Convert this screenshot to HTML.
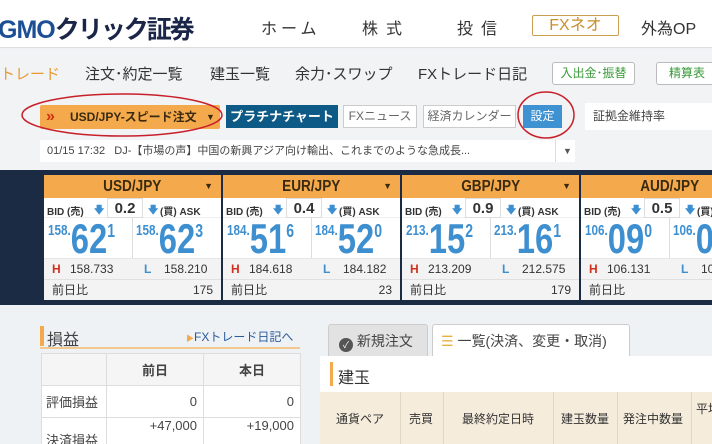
<!DOCTYPE html><html><head><meta charset="utf-8"><style>
*{margin:0;padding:0;box-sizing:border-box}
html,body{width:712px;height:444px;overflow:hidden}
body{background:#eef2f5;font-family:"Liberation Sans","Noto Sans CJK JP",sans-serif;position:relative;color:#333}
.a{position:absolute;white-space:nowrap}
.card{position:absolute;top:175px;width:177px;height:125px;background:#fff;overflow:hidden}
.card .h{height:23px;background:#f4aa4c;font:bold 16px "Liberation Sans",sans-serif;color:#3a2a10;text-align:center;line-height:23px;position:relative}
.card .h s{text-decoration:none;display:inline-block;transform:scaleX(.85)}
.card .h i{position:absolute;right:8px;top:0;font-style:normal;font-size:9px}
.bid{height:20px;font:bold 10px "Liberation Sans","Noto Sans CJK JP",sans-serif;color:#333;position:relative;border-bottom:1px solid #eee}
.bid span{position:absolute;top:5px}
.sp{position:absolute;left:63px;top:0;width:36px;height:20px;border:1px solid #ddd;text-align:center;font-size:15px;line-height:19px}
.pr{height:40px;position:relative;color:#3d8fd0;font-weight:bold}
.pr .d{position:absolute;left:88px;top:0;height:40px;border-left:1px solid #ddd}
.pr .p{position:absolute;top:0;transform:scaleX(.78);transform-origin:left top}
.pr b{font-size:15px;vertical-align:top;position:relative;top:4px}
.pr em{font-style:normal;font-size:42px;line-height:42px}
.pr sup{font-size:18px;vertical-align:top;position:relative;top:3px}
.hl{height:21px;background:#f3f3f3;font:12px "Liberation Sans",sans-serif;position:relative;line-height:21px;border-top:1px solid #e5e5e5}
.zr{height:21px;background:#f3f3f3;border-top:1px solid #e0e0e0;font:12px "Liberation Sans","Noto Sans CJK JP",sans-serif;line-height:20px;padding:0 8px;display:flex;justify-content:space-between}
td,th{border:1px solid #ddd}
</style></head><body>
<div class="a" style="left:0;top:0;width:712px;height:48px;background:#fff;border-bottom:1px solid #ddd"></div>
<div class="a" style="left:-2px;top:10px;font:bold 25px 'Liberation Sans','Noto Sans CJK JP',sans-serif;color:#1d4f95;letter-spacing:-1px">GMO<span style="color:#1a2548;letter-spacing:-2px">クリック証券</span></div>
<div class="a" style="left:261px;top:15px;font-size:16px;letter-spacing:4px;color:#333">ホーム</div>
<div class="a" style="left:362px;top:15px;font-size:16px;letter-spacing:8px">株式</div>
<div class="a" style="left:457px;top:15px;font-size:16px;letter-spacing:8px">投信</div>
<div class="a" style="left:532px;top:15px;width:87px;height:21px;border:1px solid #c8a050;border-radius:2px;color:#c8902a;font-size:16px;text-align:center;line-height:19px">FXネオ</div>
<div class="a" style="left:641px;top:15px;font-size:16px">外為OP</div>
<div class="a" style="left:0;top:49px;width:712px;height:121px;background:#f1f3f5"></div>
<div class="a" style="left:0;top:63px;font-size:15px;color:#e89a30">トレード</div>
<div class="a" style="left:85px;top:63px;font-size:15px">注文･約定一覧</div>
<div class="a" style="left:210px;top:63px;font-size:15px">建玉一覧</div>
<div class="a" style="left:295px;top:63px;font-size:15px">余力･スワップ</div>
<div class="a" style="left:418px;top:63px;font-size:15px">FXトレード日記</div>
<div class="a" style="left:552px;top:62px;width:83px;height:23px;background:#fff;border:1px solid #bbb;border-radius:3px;color:#3a9a3a;font-size:12px;text-align:center;line-height:21px">入出金･振替</div>
<div class="a" style="left:656px;top:62px;width:56px;height:23px;background:#fff;border:1px solid #bbb;border-right:none;border-radius:3px 0 0 3px;color:#3a9a3a;font-size:12px;padding-left:12px;line-height:21px">精算表</div>
<div class="a" style="left:40px;top:105px;width:180px;height:24px;background:#f4aa4c;border-radius:2px"></div>
<div class="a" style="left:46px;top:105px;color:#d03010;font:bold 16px sans-serif;line-height:24px">»</div>
<div class="a" style="left:70px;top:105px;line-height:24px;font-size:12px;font-weight:bold;color:#3a2a10">USD/JPY-スピード注文</div>
<div class="a" style="left:206px;top:105px;line-height:24px;font-size:9px;color:#3a2a10">▼</div>
<svg class="a" style="left:0;top:0" width="712" height="170"><ellipse cx="122" cy="115" rx="100" ry="21" fill="none" stroke="#c8202a" stroke-width="1.5"/><ellipse cx="546" cy="115" rx="28" ry="23" fill="none" stroke="#c8202a" stroke-width="1.5"/></svg>
<div class="a" style="left:226px;top:105px;width:112px;height:23px;background:#0e5a86;color:#fff;font-size:13px;text-align:center;line-height:23px;font-weight:bold">プラチナチャート</div>
<div class="a" style="left:343px;top:105px;width:74px;height:23px;background:#fff;border:1px solid #ccc;color:#666;font-size:12px;text-align:center;line-height:21px">FXニュース</div>
<div class="a" style="left:423px;top:105px;width:93px;height:23px;background:#fff;border:1px solid #ccc;color:#666;font-size:12px;text-align:center;line-height:21px">経済カレンダー</div>
<div class="a" style="left:523px;top:105px;width:39px;height:23px;background:#3e92d2;color:#fff;font-size:12px;text-align:center;line-height:23px">設定</div>
<div class="a" style="left:585px;top:103px;width:127px;height:27px;background:#fff;font-size:12px;color:#444;padding-left:8px;line-height:27px">証拠金維持率</div>
<div class="a" style="left:40px;top:140px;width:535px;height:22px;background:#fff;font-size:11px;color:#444;line-height:22px;padding-left:7px">01/15 17:32&nbsp;&nbsp; DJ-【市場の声】中国の新興アジア向け輸出、これまでのような急成長...</div>
<div class="a" style="left:555px;top:140px;height:22px;border-left:1px solid #ddd;font-size:9px;line-height:22px;padding-left:7px;color:#555">▼</div>
<div class="a" style="left:0;top:170px;width:712px;height:135px;background:#1c2b44"></div>

<div class="card" style="left:44px"><div class="h"><s>USD/JPY</s><i>▼</i></div><div class="bid"><span style="left:3px">BID (売)</span><span style="left:50px;color:#3d8fd0">🡇</span><div class="sp">0.2</div><span style="left:104px;color:#3d8fd0">🡇</span><span style="left:116px">(買) ASK</span></div><div class="pr"><div class="d"></div><div class="p" style="left:4px"><b>158.</b><em>62</em><sup>1</sup></div><div class="p" style="left:92px"><b>158.</b><em>62</em><sup>3</sup></div></div><div class="hl"><span class="a" style="left:8px;color:#d03020;font-weight:bold">H</span><span class="a" style="left:26px">158.733</span><span class="a" style="left:100px;color:#3d8fd0;font-weight:bold">L</span><span class="a" style="left:120px">158.210</span></div><div class="zr"><span>前日比</span><span>175</span></div></div>

<div class="card" style="left:223px"><div class="h"><s>EUR/JPY</s><i>▼</i></div><div class="bid"><span style="left:3px">BID (売)</span><span style="left:50px;color:#3d8fd0">🡇</span><div class="sp">0.4</div><span style="left:104px;color:#3d8fd0">🡇</span><span style="left:116px">(買) ASK</span></div><div class="pr"><div class="d"></div><div class="p" style="left:4px"><b>184.</b><em>51</em><sup>6</sup></div><div class="p" style="left:92px"><b>184.</b><em>52</em><sup>0</sup></div></div><div class="hl"><span class="a" style="left:8px;color:#d03020;font-weight:bold">H</span><span class="a" style="left:26px">184.618</span><span class="a" style="left:100px;color:#3d8fd0;font-weight:bold">L</span><span class="a" style="left:120px">184.182</span></div><div class="zr"><span>前日比</span><span>23</span></div></div>

<div class="card" style="left:402px"><div class="h"><s>GBP/JPY</s><i>▼</i></div><div class="bid"><span style="left:3px">BID (売)</span><span style="left:50px;color:#3d8fd0">🡇</span><div class="sp">0.9</div><span style="left:104px;color:#3d8fd0">🡇</span><span style="left:116px">(買) ASK</span></div><div class="pr"><div class="d"></div><div class="p" style="left:4px"><b>213.</b><em>15</em><sup>2</sup></div><div class="p" style="left:92px"><b>213.</b><em>16</em><sup>1</sup></div></div><div class="hl"><span class="a" style="left:8px;color:#d03020;font-weight:bold">H</span><span class="a" style="left:26px">213.209</span><span class="a" style="left:100px;color:#3d8fd0;font-weight:bold">L</span><span class="a" style="left:120px">212.575</span></div><div class="zr"><span>前日比</span><span>179</span></div></div>

<div class="card" style="left:581px;width:131px"><div class="h" style="width:177px"><s>AUD/JPY</s><i>▼</i></div><div class="bid"><span style="left:3px">BID (売)</span><span style="left:50px;color:#3d8fd0">🡇</span><div class="sp">0.5</div><span style="left:104px;color:#3d8fd0">🡇</span><span style="left:116px">(買)</span></div><div class="pr"><div class="d"></div><div class="p" style="left:4px"><b>106.</b><em>09</em><sup>0</sup></div><div class="p" style="left:92px"><b>106.</b><em>09</em></div></div><div class="hl"><span class="a" style="left:8px;color:#d03020;font-weight:bold">H</span><span class="a" style="left:26px">106.131</span><span class="a" style="left:100px;color:#3d8fd0;font-weight:bold">L</span><span class="a" style="left:120px">106</span></div><div class="zr"><span>前日比</span><span></span></div></div>

<div class="a" style="left:40px;top:326px;width:4px;height:20px;background:#f4aa4c"></div>
<div class="a" style="left:47px;top:326px;font-size:16px;color:#444">損益</div>
<div class="a" style="left:186px;top:328px;font-size:12px;color:#2a5a9a"><span style="color:#f4aa4c;font-size:8px">▶</span>FXトレード日記へ</div>
<div class="a" style="left:40px;top:347px;width:260px;height:2px;background:#f4c890"></div>
<table class="a" style="left:41px;top:353px;border-collapse:collapse;font-size:13px;color:#444">
<tr style="height:32px;background:#f5f5f5"><td style="width:65px"></td><th style="width:97px;font-weight:bold">前日</th><th style="width:97px">本日</th></tr>
<tr style="height:32px;background:#fff"><td style="padding-left:4px">評価損益</td><td style="text-align:right;padding-right:6px">0</td><td style="text-align:right;padding-right:6px">0</td></tr>
<tr style="height:32px;background:#fff"><td style="padding-left:4px;vertical-align:bottom">決済損益</td><td style="text-align:right;padding-right:6px;vertical-align:top">+47,000</td><td style="text-align:right;padding-right:6px;vertical-align:top">+19,000</td></tr>
</table>
<div class="a" style="left:328px;top:324px;width:100px;height:32px;background:#e2e2e2;border:1px solid #ccc;border-bottom:none;border-radius:3px 3px 0 0;font-size:14px;line-height:32px;padding-left:10px;color:#444"><span style="display:inline-block;width:14px;height:14px;border-radius:50%;background:#555;color:#fff;font-size:9px;text-align:center;line-height:14px;vertical-align:-2px">✓</span> 新規注文</div>
<div class="a" style="left:432px;top:324px;width:198px;height:33px;background:#fff;border:1px solid #ccc;border-bottom:none;border-radius:3px 3px 0 0;font-size:14px;line-height:32px;padding-left:8px;color:#444"><span style="color:#e8b040">☰</span> 一覧(決済、変更・取消)</div>
<div class="a" style="left:320px;top:356px;width:392px;height:36px;background:#fff"></div>
<div class="a" style="left:330px;top:362px;width:3px;height:24px;background:#f4aa4c"></div>
<div class="a" style="left:338px;top:364px;font-size:16px;color:#333">建玉</div>
<div class="a" style="left:320px;top:392px;width:392px;height:52px;background:#f5ecdc"></div>
<div class="a" style="left:400px;top:392px;width:1px;height:52px;background:#e0d6c4"></div>
<div class="a" style="left:443px;top:392px;width:1px;height:52px;background:#e0d6c4"></div>
<div class="a" style="left:553px;top:392px;width:1px;height:52px;background:#e0d6c4"></div>
<div class="a" style="left:617px;top:392px;width:1px;height:52px;background:#e0d6c4"></div>
<div class="a" style="left:691px;top:392px;width:1px;height:52px;background:#e0d6c4"></div>
<div class="a" style="left:336px;top:410px;font-size:12px">通貨ペア</div>
<div class="a" style="left:409px;top:410px;font-size:12px">売買</div>
<div class="a" style="left:462px;top:410px;font-size:12px">最終約定日時</div>
<div class="a" style="left:561px;top:410px;font-size:12px">建玉数量</div>
<div class="a" style="left:623px;top:410px;font-size:12px">発注中数量</div>
<div class="a" style="left:696px;top:400px;font-size:12px">平均</div>
</body></html>
